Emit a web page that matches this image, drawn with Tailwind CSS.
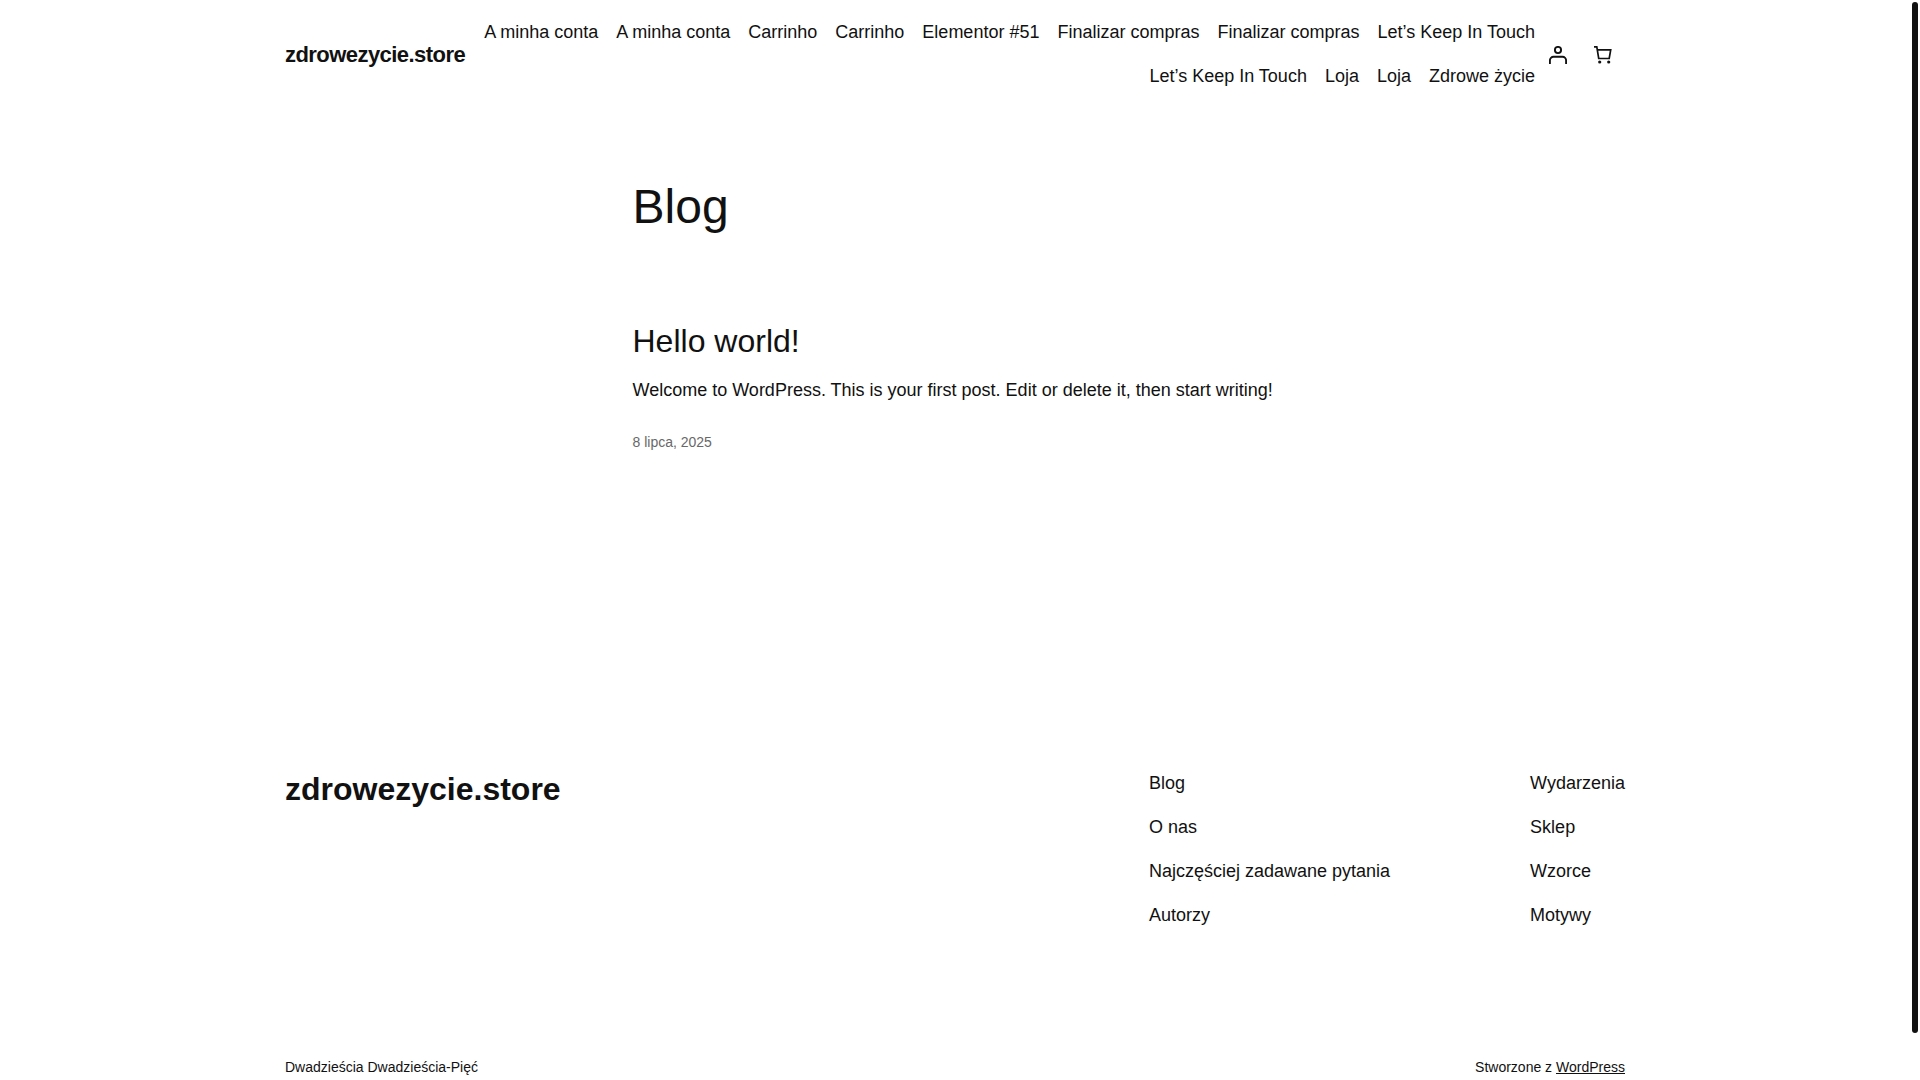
<!DOCTYPE html>
<html lang="pl">
<head>
<meta charset="utf-8">
<meta name="viewport" content="width=device-width, initial-scale=1">
<title>Blog – zdrowezycie.store</title>
<script src="https://cdn.jsdelivr.net/npm/@tailwindcss/browser@4"></script>
</head>
<body class="bg-white pr-[10px] font-['Liberation_Sans',Arial,sans-serif] text-lg leading-[25px] text-[#111]">
<div class="px-12">
  <header class="mx-auto flex max-w-[1340px] items-center justify-between gap-2 py-5">
    <p class="text-[22px] leading-[31px] font-bold tracking-tight"><a href="#">zdrowezycie.store</a></p>
    <div class="flex items-center">
      <nav aria-label="Menu">
        <ul class="flex flex-wrap justify-end gap-x-[18px] gap-y-[19px]">
          <li><a href="#">A minha conta</a></li>
          <li><a href="#">A minha conta</a></li>
          <li><a href="#">Carrinho</a></li>
          <li><a href="#">Carrinho</a></li>
          <li><a href="#">Elementor #51</a></li>
          <li><a href="#">Finalizar compras</a></li>
          <li><a href="#">Finalizar compras</a></li>
          <li><a href="#">Let’s Keep In Touch</a></li>
          <li><a href="#">Let’s Keep In Touch</a></li>
          <li><a href="#">Loja</a></li>
          <li><a href="#">Loja</a></li>
          <li><a href="#">Zdrowe życie</a></li>
        </ul>
      </nav>
      <a href="#" aria-label="Moje konto" class="shrink-0 px-[14px]">
        <svg class="size-[18px]" viewBox="0 0 18 18" fill="none" stroke="currentColor" stroke-width="1.9"><circle cx="9" cy="4" r="3.1"/><path d="M.9 18v-3.6a3.6 3.6 0 0 1 3.6-3.6h9a3.6 3.6 0 0 1 3.6 3.6V18"/></svg>
      </a>
      <button type="button" aria-label="Koszyk" class="shrink-0 px-[13px]">
        <svg class="size-[18px]" viewBox="0 0 18 18" fill="none" stroke="currentColor" stroke-width="1.7"><path d="M0 .9h2.8l1.9 11.6h10.5l1.5-8.6H3.4"/><circle cx="5.7" cy="16" r="1.6" fill="currentColor" stroke="none"/><circle cx="14.7" cy="16" r="1.6" fill="currentColor" stroke="none"/></svg>
      </button>
    </div>
  </header>

  <main class="mx-auto max-w-[645px] pt-[71px]">
    <h1 class="text-5xl leading-[54px]">Blog</h1>
    <article class="pt-[89px]">
      <h2 class="text-[32px] leading-9"><a href="#">Hello world!</a></h2>
      <p class="pt-[19px]">Welcome to WordPress. This is your first post. Edit or delete it, then start writing!</p>
      <p class="pt-[29px] text-sm leading-5 text-[#686868]"><time datetime="2025-07-08"><a href="#">8 lipca, 2025</a></time></p>
    </article>
  </main>

  <footer class="mx-auto max-w-[1340px] pt-[319px]">
    <div class="flex flex-wrap justify-between gap-8">
      <p class="text-[32px] leading-9 font-bold"><a href="#">zdrowezycie.store</a></p>
      <div class="flex flex-wrap gap-[140px]">
        <nav aria-label="Informacje">
          <ul class="flex flex-col gap-[19px]">
            <li><a href="#">Blog</a></li>
            <li><a href="#">O nas</a></li>
            <li><a href="#">Najczęściej zadawane pytania</a></li>
            <li><a href="#">Autorzy</a></li>
          </ul>
        </nav>
        <nav aria-label="Więcej">
          <ul class="flex flex-col gap-[19px]">
            <li><a href="#">Wydarzenia</a></li>
            <li><a href="#">Sklep</a></li>
            <li><a href="#">Wzorce</a></li>
            <li><a href="#">Motywy</a></li>
          </ul>
        </nav>
      </div>
    </div>
    <div class="flex flex-wrap justify-between gap-5 pt-[129px] text-sm leading-5">
      <p>Dwadzieścia Dwadzieścia-Pięć</p>
      <p>Stworzone z <a href="#" class="underline">WordPress</a></p>
    </div>
  </footer>
</div>
<div class="fixed top-0.5 right-0.5 h-[95.5vh] w-1.5 rounded-full bg-[#111]" aria-hidden="true"></div>
</body>
</html>
